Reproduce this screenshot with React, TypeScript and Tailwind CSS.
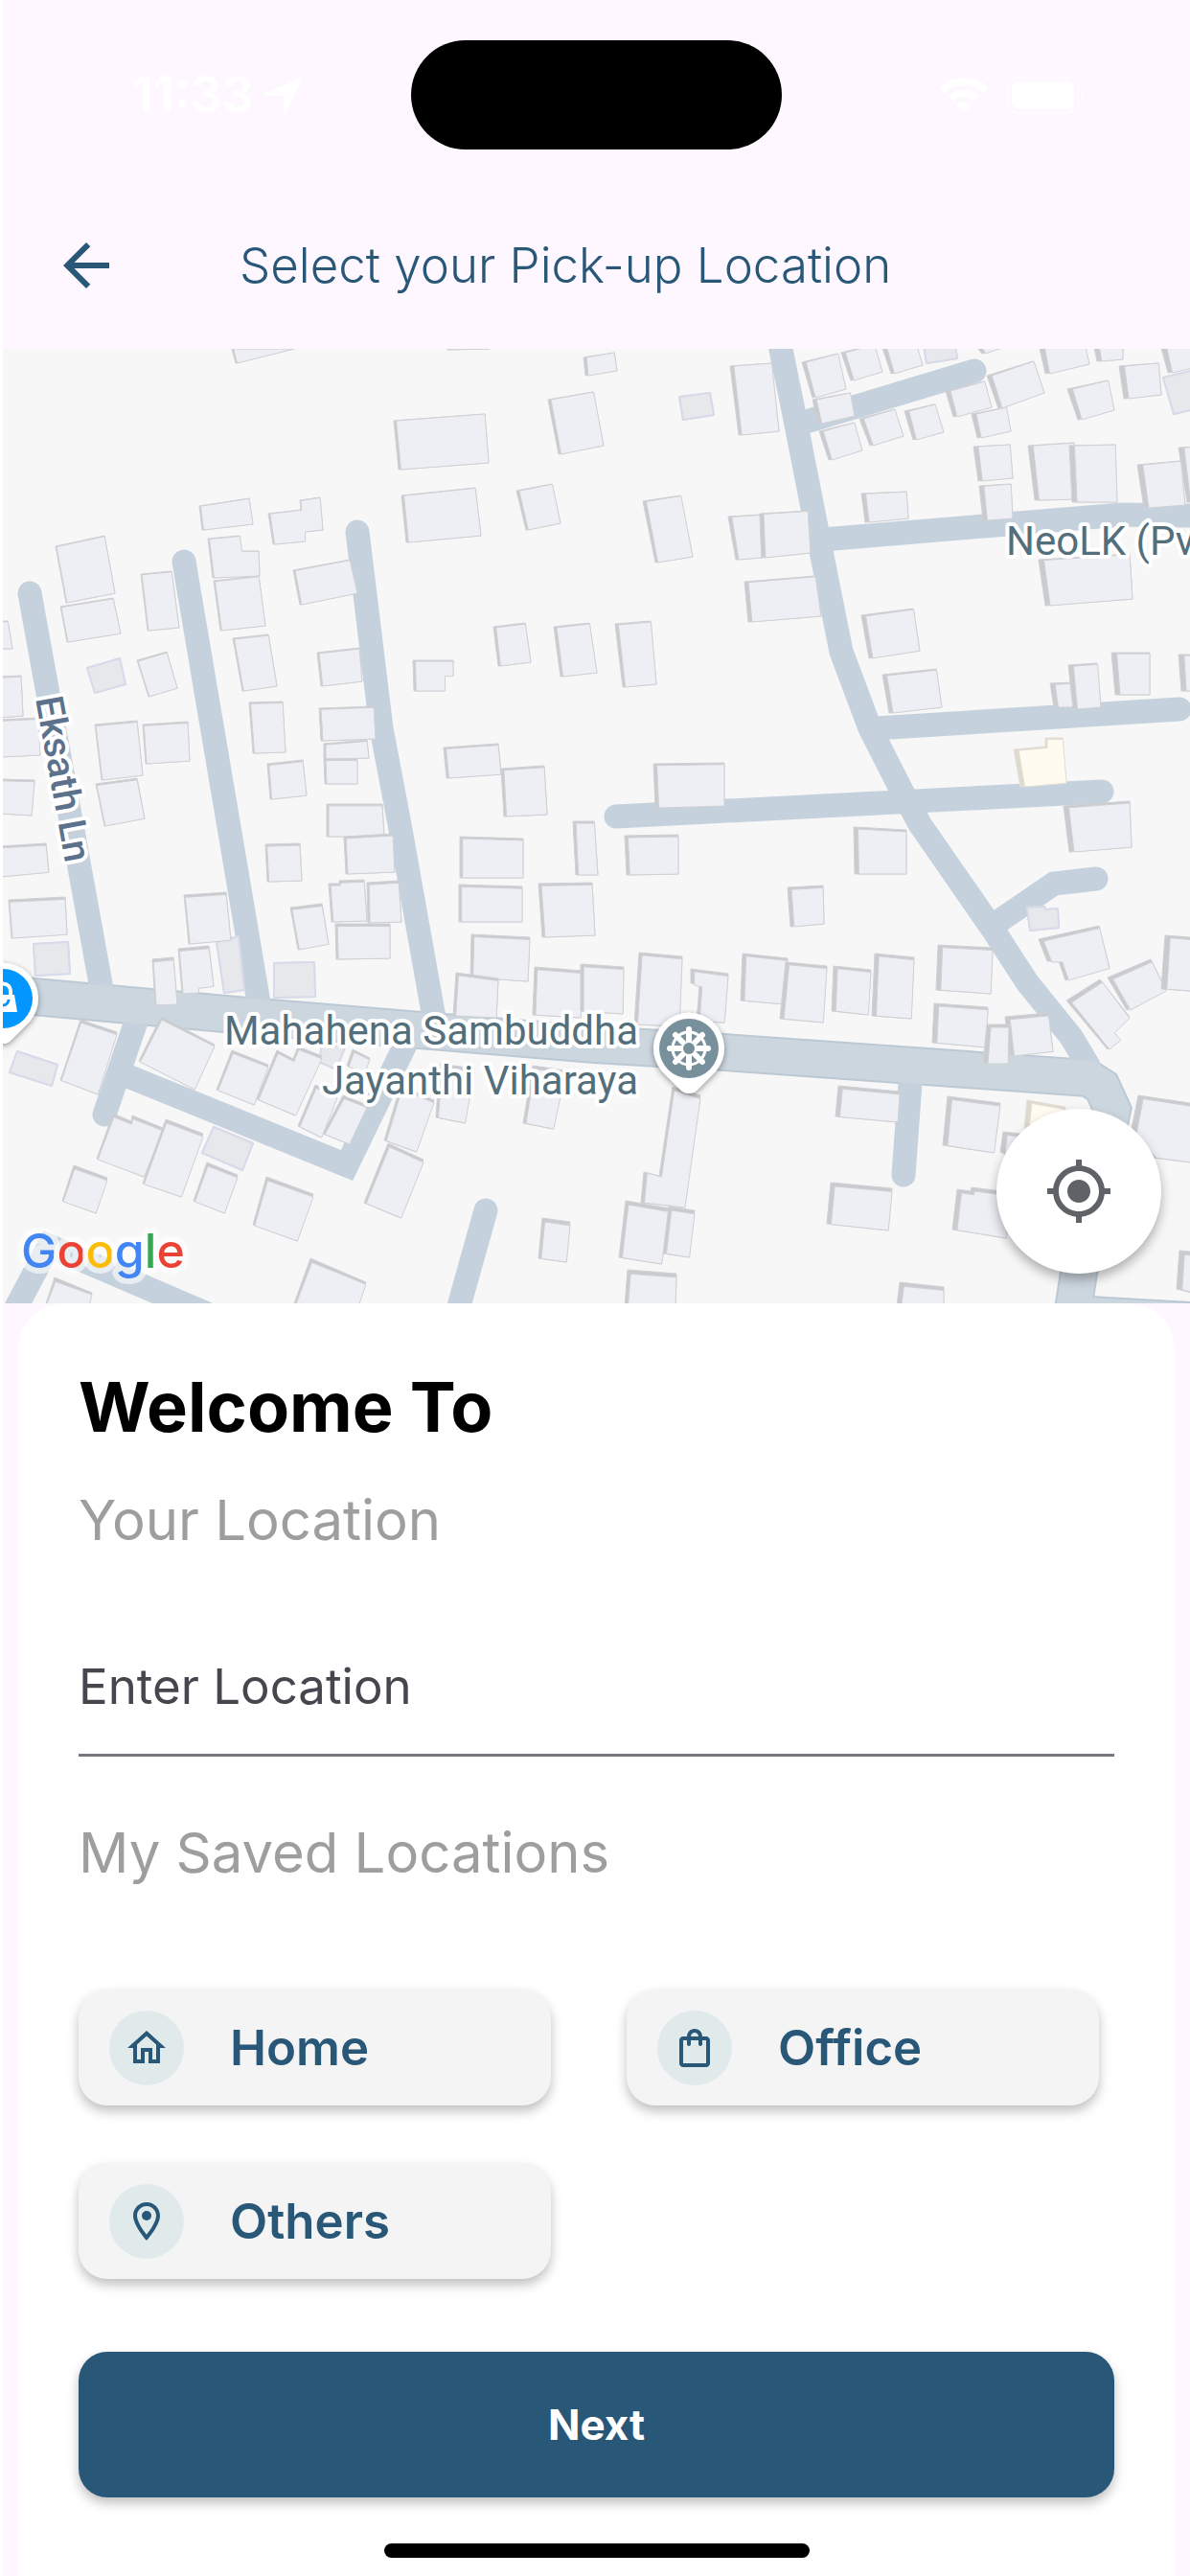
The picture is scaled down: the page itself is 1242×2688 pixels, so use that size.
import React, { useState } from 'react';
import {
  MdArrowBack,
  MdMyLocation,
  MdOutlineHome,
  MdOutlineLocationOn,
  MdOutlineShoppingBag,
} from 'react-icons/md';

type Kind = 'house' | 'plain' | 'shop';

// Map sheets: outlines are stored in sheet units and scaled to map pixels.
const UNIT_X = 621 / 1568;
const UNIT_Y = 1 / 3;

const SHEETS: { x: number; y: number; house: string; plain: string; shop?: string }[] = [
  {
    x: 0,
    y: 360,
    house: `610,12 620,56 775,12
1178,0 1180,15 1290,13 1290,0
1538,38 1618,24 1625,80 1543,97
1445,172 1562,146 1590,316 1471,341
1038,238 1277,215 1288,368 1050,390
1057,470 1253,448 1267,596 1071,617
1360,457 1455,434 1478,558 1385,580
524,503 656,481 666,561 534,580
707,527 794,515 790,485 843,478 851,578 802,584 802,615 720,625
549,606 632,598 636,645 681,645 685,722 560,728
563,737 682,723 699,880 580,895
146,630 275,598 302,776 175,808
160,818 299,793 317,904 178,931
372,716 453,707 471,885 390,894
0,864 20,864 33,950 0,952
772,704 922,672 942,778 790,814
362,986 440,961 468,1075 391,1101
614,919 707,905 730,1069 640,1084
835,963 946,948 955,1053 845,1069
1087,988 1195,988 1195,1036 1171,1036 1171,1084 1092,1084
1300,882 1384,871 1398,993 1314,1005
1460,882 1553,871 1573,1027 1476,1039
0,1038 56,1035 61,1162 0,1166
0,1172 100,1168 106,1284 0,1290
0,1358 90,1362 84,1473 0,1468
249,1188 360,1176 375,1348 267,1363
377,1188 495,1180 501,1303 383,1312
252,1373 360,1355 382,1482 275,1505
657,1120 746,1117 753,1275 666,1279
704,1310 799,1299 808,1409 712,1421
840,1138 985,1131 990,1232 846,1239
853,1247 966,1237 971,1292 854,1297
854,1297 943,1297 943,1373 857,1375
860,1438 1007,1436 1012,1540 862,1540
1170,1260 1314,1248 1320,1343 1177,1356
1320,1325 1433,1317 1441,1471 1328,1476
1510,1490 1565,1490 1575,1658 1517,1660`,
    plain: `231,1010 316,981 332,1062 251,1088`,
  },
  {
    x: 621,
    y: 360,
    house: `355,67 465,58 485,271 378,283
125,489 225,472 257,662 160,682
352,537 435,532 440,665 370,672
435,528 560,518 568,652 440,665
393,740 580,722 595,849 405,868
52,872 147,863 162,1062 72,1072
545,55 638,28 662,138 573,164
650,25 700,10 738,10 757,85 675,110
757,10 848,10 863,62 780,90
572,172 672,149 685,223 588,247
590,270 683,243 705,331 615,360
697,230 788,200 812,286 725,316
815,207 893,185 918,274 838,297
925,143 1025,113 1045,195 945,226
993,217 1083,195 1097,270 1008,290
1032,97 1155,52 1183,150 1062,197
1008,10 1072,10 1020,26
1172,10 1293,10 1302,60 1187,90
1315,10 1390,10 1391,45 1322,50
1245,137 1350,112 1369,205 1273,234
1382,65 1485,56 1493,157 1395,167
1492,10 1575,0 1575,72 1510,86
998,317 1094,311 1102,418 1010,427
1013,440 1096,434 1101,542 1023,548
1142,314 1263,305 1270,482 1158,487
1250,315 1370,311 1375,493 1257,493
1537,322 1600,319 1600,492 1560,492
1430,374 1543,362 1555,500 1447,510
702,466 820,459 825,543 712,555
1170,672 1408,655 1417,796 1187,817
702,846 838,825 856,956 722,980
758,1032 899,1014 913,1133 776,1153
1360,962 1463,964 1463,1095 1372,1095
1538,968 1600,968 1600,1082 1545,1082
1200,1058 1263,1055 1268,1133 1210,1135
1248,1002 1323,997 1332,1133 1260,1139
153,1310 340,1308 342,1444 160,1448
1235,1442 1408,1428 1415,1573 1250,1587`,
    plain: `223,162 303,149 312,220 232,235
865,0 950,0 955,42 873,57
1497,103 1580,78 1580,200 1525,217`,
    shop: `1103,1265 1187,1256 1187,1230 1233,1230 1243,1370 1120,1383`,
  },
  {
    x: 0,
    y: 860,
    house: `0,70 120,60 128,150 0,164
23,238 172,229 177,345 31,357
486,223 597,213 608,362 498,374
402,424 457,418 467,563 410,567
469,390 551,382 562,506 522,512 522,528 481,530
700,62 790,60 795,177 704,181
906,38 1035,30 1041,149 912,157
867,187 893,185 893,176 960,174 966,303 873,306
967,182 1050,178 1057,306 970,309
884,311 1027,311 1027,421 886,423
766,262 849,250 867,376 785,393
1212,39 1378,44 1378,167 1212,167
1210,190 1376,196 1376,307 1210,307
1418,186 1560,183 1567,347 1428,355
1243,346 1396,355 1392,493 1240,480
1201,465 1313,482 1307,607 1194,600
1410,447 1534,458 1530,606 1404,598
1529,437 1645,448 1640,593 1529,585
212,612 307,652 258,846 158,800
424,602 566,690 512,830 365,742
610,709 706,752 668,879 571,830
730,708 772,735 785,697 848,725 777,913 676,862
930,705 975,733 960,780 915,755
830,815 888,850 845,982 785,945
905,850 966,880 920,1003 850,970
1055,820 1145,865 1095,1027 1012,990
1160,750 1250,765 1224,937 1148,918
1405,755 1490,770 1457,955 1378,935
299,905 345,930 348,913 428,950 380,1104 256,1047
437,925 535,968 478,1168 377,1125
195,1068 283,1108 252,1218 165,1178
545,1060 625,1098 590,1217 510,1180
702,1105 825,1157 783,1305 666,1253
1022,1000 1115,1050 1055,1232 960,1185
1430,1232 1503,1245 1491,1370 1418,1360
143,1420 243,1468 235,1510 118,1510
818,1360 965,1435 945,1510 772,1510`,
    plain: `88,376 179,369 185,467 93,474
570,368 628,350 645,518 590,527
723,436 829,433 831,540 723,542
45,712 152,752 136,820 25,778
848,690 910,700 885,768 842,745
562,948 667,998 640,1082 534,1030`,
  },
  {
    x: 621,
    y: 860,
    house: `78,35 220,33 220,157 83,158
683,10 820,17 820,155 685,155
508,198 602,193 604,313 515,320
905,377 1047,388 1043,532 898,520
893,560 1035,574 1030,700 888,683
1080,603 1195,592 1206,710 1094,727
1033,627 1090,627 1087,750 1022,750
1168,360 1327,317 1357,450 1240,488 1222,430 1192,430
1352,480 1465,422 1505,520 1402,582
1243,553 1330,485 1410,602 1365,650 1383,675 1350,705
1503,347 1600,357 1600,525 1492,517
115,403 231,415 222,632 103,627
252,453 352,468 342,622 267,618 275,505 252,498
388,406 507,420 500,563 383,553
503,433 610,445 602,620 488,608
628,445 728,457 720,596 623,586
738,405 840,418 832,610 730,600
205,822 277,850 235,1200 120,1185 130,1090 168,1100
80,1180 197,1202 175,1378 63,1357
194,1197 262,1208 248,1355 180,1343
85,1395 215,1407 212,1510 78,1510
642,818 803,836 797,932 634,915
622,1122 783,1140 773,1272 612,1250
930,853 1068,872 1050,1030 917,1005
1075,962 1120,970 1110,1050 1067,1025
955,1143 990,1150 993,1138 1090,1152 1082,1297 942,1270
803,1433 920,1448 918,1510 796,1510
1432,850 1600,878 1590,1062 1470,1043 1412,970
1540,1335 1600,1340 1600,1475 1532,1455`,
    plain: `1140,262 1185,258 1187,268 1220,265 1223,325 1146,334`,
    shop: `1140,865 1240,885 1230,960 1130,950`,
  },
];

const LANES = [
  'M31 619L106 1032',
  'M192 586L270 1046',
  'M373 555L398 760L417 860L453 1062',
  'M142 1066L109 1163',
  'M131 1122L362 1216L424 1088',
  'M18 1362L0 1405M18 1362L51 1300L214 1370',
  'M507 1263L477 1370',
  'M950 1130L943 1226',
  'M813 355L828 428L852 550L878 680L908 760L940 823L960 860L1037 971L1072 1025L1118 1082L1136 1112',
  'M838 441L1017 387',
  'M859 563L1171 537L1250 538',
  'M914 760L1231 740',
  'M643 852L1150 826',
  'M1037 965L1100 922L1144 917',
];

const HIGHWAYS = ['M-10 1036L257 1060L621 1090L756 1098L1136 1125L1150 1134L1161 1158L1126 1328L1118 1380', 'M1120 1371L1260 1379'];

const FILL: Record<Kind, { roof: string; wall: string; edge: string }> = {
  house: { roof: '#eeeff5', wall: '#cacbcf', edge: '#d0d1d5' },
  plain: { roof: '#e7e8ec', wall: '#e7e8ec', edge: '#d8daea' },
  shop: { roof: '#fffbf0', wall: '#dedad0', edge: '#e4e0d6' },
};

function Building({ pts, kind }: { pts: number[][]; kind: Kind }) {
  const xs = pts.map((p) => p[0]);
  const ys = pts.map((p) => p[1]);
  const right = Math.max(...xs);
  const bottom = Math.max(...ys);
  const w = right - Math.min(...xs);
  const h = bottom - Math.min(...ys);
  // walls get taller towards the bottom right corner of the map
  const dx = kind === 'plain' ? 0 : 1 + Math.max(0, right - 150) / 230;
  const dy = kind === 'plain' ? 0 : Math.max(0, bottom - 500) / 200;
  const roof = pts.map(([x, y]) => [right - (right - x) * (1 - dx / w), bottom - (bottom - y) * (1 - dy / h)]);
  const c = FILL[kind];
  return (
    <g strokeWidth={kind === 'plain' ? 2 : 1} strokeLinejoin="round">
      <polygon points={pts.join(' ')} fill={c.wall} stroke={c.edge} />
      <polygon points={roof.join(' ')} fill={c.roof} stroke={c.edge} />
    </g>
  );
}

function parse(rows: string, ox: number, oy: number) {
  return rows.split('\n').map((row) =>
    row.split(' ').map((p) => {
      const [x, y] = p.split(',').map(Number);
      return [Math.round(ox + x * UNIT_X), Math.round(oy + y * UNIT_Y)];
    })
  );
}

function Buildings() {
  return (
    <g>
      {SHEETS.map((s) =>
        (['plain', 'house', 'shop'] as Kind[]).map((kind) =>
          s[kind] ? parse(s[kind]!, s.x, s.y).map((pts, i) => <Building key={`${s.x}-${s.y}-${kind}-${i}`} pts={pts} kind={kind} />) : null
        )
      )}
    </g>
  );
}

function Pin({ x, y, color, children }: { x: number; y: number; color: string; children: React.ReactNode }) {
  return (
    <g transform={`translate(${x} ${y})`}>
      <path d="M0 47C-4 47 -7 45 -9 43L-28 24A37 37 0 1 1 28 24L9 43C7 45 4 47 0 47Z" fill="#fff" filter="url(#pinShadow)" />
      <circle r="31" fill={color} />
      {children}
    </g>
  );
}

function StreetMap() {
  return (
    <svg viewBox="3 364 1239 996" className="block w-full h-auto" role="img" aria-label="Map">
      <defs>
        <filter id="pinShadow" x="-30%" y="-30%" width="160%" height="160%">
          <feDropShadow dx="0" dy="2" stdDeviation="3" floodColor="#000" floodOpacity="0.4" />
        </filter>
      </defs>
      <rect x="0" y="360" width="1250" height="1010" fill="#f7f7f7" />
      <g fill="none" strokeWidth="40" stroke="#bcc9d5">
        {HIGHWAYS.map((d) => <path key={d} d={d} />)}
      </g>
      <g fill="none" strokeWidth="25" stroke="#c5d1dd" strokeLinecap="round">
        {LANES.map((d) => <path key={d} d={d} />)}
      </g>
      <g fill="none" strokeWidth="36" stroke="#ccd6df">
        {HIGHWAYS.map((d) => <path key={d} d={d} />)}
      </g>
      <Buildings />

      <g fontFamily="Roboto, sans-serif" fontSize="42" fill="#546f7c" stroke="#fff" strokeWidth="8" strokeLinejoin="round" paintOrder="stroke">
        <text x="666" y="1090" textAnchor="end">Mahahena Sambuddha</text>
        <text x="666" y="1142" textAnchor="end">Jayanthi Viharaya</text>
        <text x="1050" y="579">NeoLK (Pv</text>
        <text transform="translate(37 729) rotate(79.7)" fontSize="40" fontWeight="500" fill="#5c728c">Eksath Ln</text>
      </g>

      <Pin x={719} y={1094} color="#78909c">
        <g fill="none" stroke="#fff" strokeLinecap="round">
          <circle r="17" strokeWidth="3" />
          <path d="M0 -20V20M-20 0H20M-14 -14L14 14M-14 14L14 -14" strokeWidth="6" />
        </g>
        <circle r="6" fill="#78909c" />
      </Pin>
      <Pin x={3} y={1042} color="#0496ff">
        <path d="M-15 -4H12L15 14H-15Z" fill="#fff" />
        <path d="M-7 -4V-8A7 7 0 0 1 8 -8V-4" fill="none" stroke="#fff" strokeWidth="4" />
        <path d="M-6 1A6 6 0 0 0 6 1" fill="none" stroke="#0496ff" strokeWidth="3" />
      </Pin>

      <text x="22" y="1323" fontFamily="Inter, sans-serif" fontSize="50" fontWeight="500" stroke="#fff" strokeOpacity="0.6" strokeWidth="12" strokeLinejoin="round" paintOrder="stroke">
        <tspan fill="#4285f4">G</tspan>
        <tspan fill="#ea4335">o</tspan>
        <tspan fill="#fbbc05">o</tspan>
        <tspan fill="#4285f4">g</tspan>
        <tspan fill="#34a853">l</tspan>
        <tspan fill="#ea4335">e</tspan>
      </text>
    </svg>
  );
}

function StatusBar() {
  return (
    <div className="grid grid-cols-[1fr_auto_1fr] items-center py-[42px] text-white">
      <div className="flex items-center gap-3 pl-[135px]">
        <span className="text-[52px] leading-none font-semibold">11:33</span>
        <svg viewBox="0 0 40 40" className="w-10 h-10" fill="currentColor">
          <path d="M39 1L22 39C21 41 19 40 19 38V21H2C0 21 -1 19 1 18Z" />
        </svg>
      </div>
      <div className="w-[387px] h-[114px] rounded-full bg-black" />
      <div className="flex items-center justify-end gap-5 pr-[111px]">
        <div className="flex gap-2 pt-7">
          {[0, 1, 2, 3].map((i) => (
            <span key={i} className="w-2 h-2 rounded-full bg-white/20" />
          ))}
        </div>
        <svg viewBox="0 0 50 37" className="w-[50px] h-[37px]" fill="currentColor">
          <path d="M25 0C35 0 44 4 50 10L45 16C40 11 33 8 25 8S10 11 5 16L0 10C6 4 15 0 25 0Z" />
          <path d="M25 13C31 13 37 15 41 19L36 25C33 22 29 20 25 20S17 22 14 25L9 19C13 15 19 13 25 13Z" />
          <path d="M25 25C28 25 31 26 33 28L25 37L17 28C19 26 22 25 25 25Z" />
        </svg>
        <svg viewBox="0 0 80 39" className="w-20 h-[39px]">
          <rect x="1" y="1" width="73" height="37" rx="12" fill="none" stroke="#fff" strokeOpacity="0.4" strokeWidth="2" />
          <rect x="5" y="5" width="65" height="29" rx="8" fill="#fff" />
          <path d="M77 14C81 16 81 23 77 25Z" fill="#fff" fillOpacity="0.5" />
        </svg>
      </div>
    </div>
  );
}

const savedLocations = [
  { name: 'Home', Icon: MdOutlineHome },
  { name: 'Office', Icon: MdOutlineShoppingBag },
  { name: 'Others', Icon: MdOutlineLocationOn },
];

export default function App() {
  const [location, setLocation] = useState('');

  return (
    <div className="min-h-screen flex flex-col bg-[#fef7ff] border-l-3 border-white font-['Inter',sans-serif]">
      <StatusBar />
      <header className="flex items-center h-[166px] pb-2 pl-[51px] text-[#285777]">
        <button type="button" aria-label="Back">
          <MdArrowBack size={72} />
        </button>
        <h1 className="pl-[124px] text-[51px] leading-[64px] font-light">Select your Pick-up Location</h1>
      </header>

      <section className="relative overflow-hidden">
        <StreetMap />
        <button
          type="button"
          aria-label="My location"
          className="absolute right-[30px] bottom-[31px] w-[172px] h-[172px] rounded-full bg-white flex items-center justify-center text-[#5f6368] shadow-[0_6px_12px_rgba(0,0,0,0.3)]"
        >
          <MdMyLocation size={72} />
        </button>
      </section>

      <main className="flex-1 flex flex-col mx-4 px-[63px] pt-[68px] pb-5 bg-white rounded-t-[48px]">
        <h2 className="text-[72px] leading-[80px] font-bold text-black">Welcome To</h2>
        <label htmlFor="location" className="mt-[46px] text-[58px] leading-[64px] text-[#9e9e9e]">
          Your Location
        </label>
        <input
          id="location"
          type="text"
          value={location}
          onChange={(e) => setLocation(e.target.value)}
          placeholder="Enter Location"
          className="mt-[71px] h-[144px] w-full text-[51px] text-[#49454f] placeholder:text-[#49454f] placeholder:opacity-100 border-b-3 border-[#79747e] bg-transparent outline-none"
        />
        <h3 className="mt-[68px] text-[58px] leading-[64px] text-[#9e9e9e]">My Saved Locations</h3>

        <div className="mt-[111px] pr-4 grid grid-cols-2 gap-x-[79px] gap-y-[60px]">
          {savedLocations.map(({ name, Icon }) => (
            <button
              key={name}
              type="button"
              className="flex items-center gap-12 h-[121px] pl-8 rounded-[30px] bg-[#f4f4f4] text-[#285777] shadow-[0_6px_12px_rgba(0,0,0,0.25)]"
            >
              <span className="flex items-center justify-center w-[78px] h-[78px] rounded-full bg-[#e0eaea]">
                <Icon size={48} />
              </span>
              <span className="text-[51px] leading-[64px] font-semibold">{name}</span>
            </button>
          ))}
        </div>

        <button
          type="button"
          className="mt-[76px] h-[152px] w-full rounded-[30px] bg-[#285777] text-white text-[44px] font-bold shadow-[0_6px_12px_rgba(0,0,0,0.25)]"
        >
          Next
        </button>
        <div className="mt-12 mx-auto w-[444px] h-[15px] rounded-full bg-black" />
      </main>
    </div>
  );
}
